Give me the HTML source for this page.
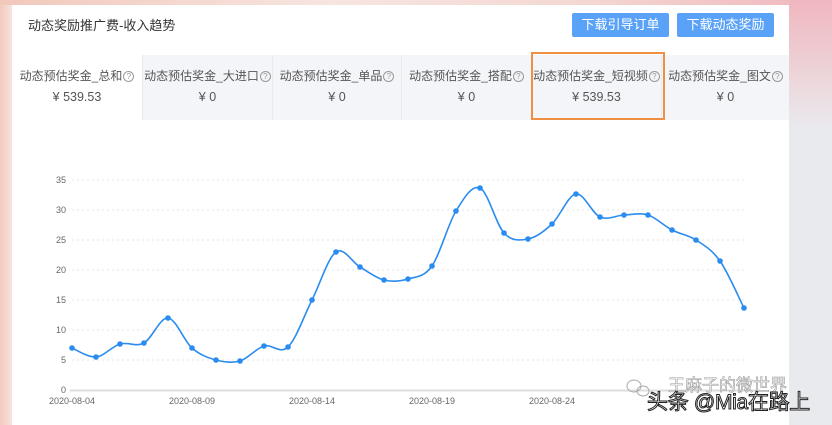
<!DOCTYPE html>
<html><head><meta charset="utf-8"><style>
*{margin:0;padding:0;box-sizing:border-box}
body{width:832px;height:425px;overflow:hidden;position:relative;font-family:"Liberation Sans","Noto Sans CJK SC",sans-serif;background:linear-gradient(90deg,#f3c9bd 0,#f6e3de 12px);}
.bgr{position:absolute;left:789px;top:0;width:43px;height:425px;background:#e9eaee}
.bgt{position:absolute;left:0;top:0;width:832px;height:5px;background:linear-gradient(90deg,#f2c8bb,#f7e5e0 40%,#f4d7d3 70%,#f0b6bd)}
.bgr2{position:absolute;left:789px;top:0;width:43px;height:130px;background:linear-gradient(180deg,#f0b6bf,#ecd6da 60%,#e9eaee)}
.panel{position:absolute;left:12px;top:5px;width:777px;height:420px;background:#fff}
.title{position:absolute;left:28px;top:15px;font-size:13px;color:#333}
.btn{position:absolute;top:13px;height:24px;background:#5aa2f7;color:#fff;font-size:13px;line-height:24px;text-align:center;border-radius:2px}
.tab{position:absolute;top:55px;height:65px;background:#f4f5f8;border-left:1px solid #e8e9ec;text-align:center;font-size:12px;color:#555;padding-top:12px;white-space:nowrap}
.tab .v{margin-top:6px;font-size:12.5px;color:#555}
.q{display:inline-block;width:11px;height:11px;border:1px solid #999;border-radius:50%;font-size:8px;line-height:9px;color:#999;vertical-align:1px;margin-left:1px}
.orange{position:absolute;left:531px;top:52px;width:134px;height:68px;border:2px solid #ee8f43}
svg{position:absolute;left:0;top:0}
.wm{position:absolute;left:647px;top:386px;font-size:21px;color:#fff;-webkit-text-stroke:1px #222;letter-spacing:-0.3px}
.wm2{position:absolute;left:668px;top:371px;font-size:17px;color:#fff;-webkit-text-stroke:.6px #999}
</style></head><body>
<div class="bgt"></div><div class="bgr"></div><div class="bgr2"></div>
<div class="panel"></div>
<div class="title">动态奖励推广费-收入趋势</div>
<div class="btn" style="left:572px;width:97px">下载引导订单</div>
<div class="btn" style="left:677px;width:97px">下载动态奖励</div>
<div class="tab" style="left:12px;width:130px;background:#fff;border:none">动态预估奖金_总和<span class="q">?</span><div class="v">¥ 539.53</div></div>
<div class="tab" style="left:142px;width:130px">动态预估奖金_大进口<span class="q">?</span><div class="v">¥ 0</div></div>
<div class="tab" style="left:272px;width:129px">动态预估奖金_单品<span class="q">?</span><div class="v">¥ 0</div></div>
<div class="tab" style="left:401px;width:130px">动态预估奖金_搭配<span class="q">?</span><div class="v">¥ 0</div></div>
<div class="tab" style="left:531px;width:130px">动态预估奖金_短视频<span class="q">?</span><div class="v">¥ 539.53</div></div>
<div class="tab" style="left:661px;width:128px">动态预估奖金_图文<span class="q">?</span><div class="v">¥ 0</div></div>
<div class="orange"></div>
<svg width="832" height="425" id="s" font-family="Liberation Sans,sans-serif">
<g stroke="#e6e6e6" stroke-dasharray="2,3">
<line x1="72" x2="746" y1="180" y2="180"/><line x1="72" x2="746" y1="210" y2="210"/><line x1="72" x2="746" y1="240" y2="240"/><line x1="72" x2="746" y1="270" y2="270"/><line x1="72" x2="746" y1="300" y2="300"/><line x1="72" x2="746" y1="330" y2="330"/><line x1="72" x2="746" y1="360" y2="360"/>
</g>
<line x1="70" x2="760" y1="390.5" y2="390.5" stroke="#ddd" stroke-width="2"/>
<g font-size="9" fill="#666" text-anchor="end">
<text x="66" y="183">35</text><text x="66" y="213">30</text><text x="66" y="243">25</text><text x="66" y="273">20</text><text x="66" y="303">15</text><text x="66" y="333">10</text><text x="66" y="363">5</text><text x="66" y="393">0</text>
</g>
<g font-size="9" fill="#666" text-anchor="middle">
<text x="72" y="404">2020-08-04</text><text x="192" y="404">2020-08-09</text><text x="312" y="404">2020-08-14</text><text x="432" y="404">2020-08-19</text><text x="552" y="404">2020-08-24</text>
</g>
<path id="p" fill="none" stroke="#2a8cf0" stroke-width="1.6"/>
<g id="d" fill="#2a8cf0"></g>
<g fill="none" stroke="#aaa" stroke-width="1"><ellipse cx="634" cy="386" rx="7" ry="6"/><ellipse cx="643" cy="391" rx="6" ry="5"/></g>
</svg>
<div class="wm2">王麻子的微世界</div>
<div class="wm">头条 @Mia在路上</div>
<script>
var ys=[348,357,344,343,318,348,360,361,346,347,300,252,267,280,279,266,211,188,233,239,224,194,217,215,215,230,240,261,308];
var P=ys.map(function(y,i){return [72+24*i,y]});
var d="M"+P[0].join(",");
for(var i=0;i<P.length-1;i++){var p0=P[i-1]||P[i],p1=P[i],p2=P[i+1],p3=P[i+2]||p2;var t=6;
d+=" C"+(p1[0]+(p2[0]-p0[0])/t)+","+(p1[1]+(p2[1]-p0[1])/t)+" "+(p2[0]-(p3[0]-p1[0])/t)+","+(p2[1]-(p3[1]-p1[1])/t)+" "+p2[0]+","+p2[1];}
document.getElementById("p").setAttribute("d",d);
var g=document.getElementById("d"),h="";
P.forEach(function(p){h+='<circle cx="'+p[0]+'" cy="'+p[1]+'" r="2.8"/>'});
g.innerHTML=h;
</script>
</body></html>
